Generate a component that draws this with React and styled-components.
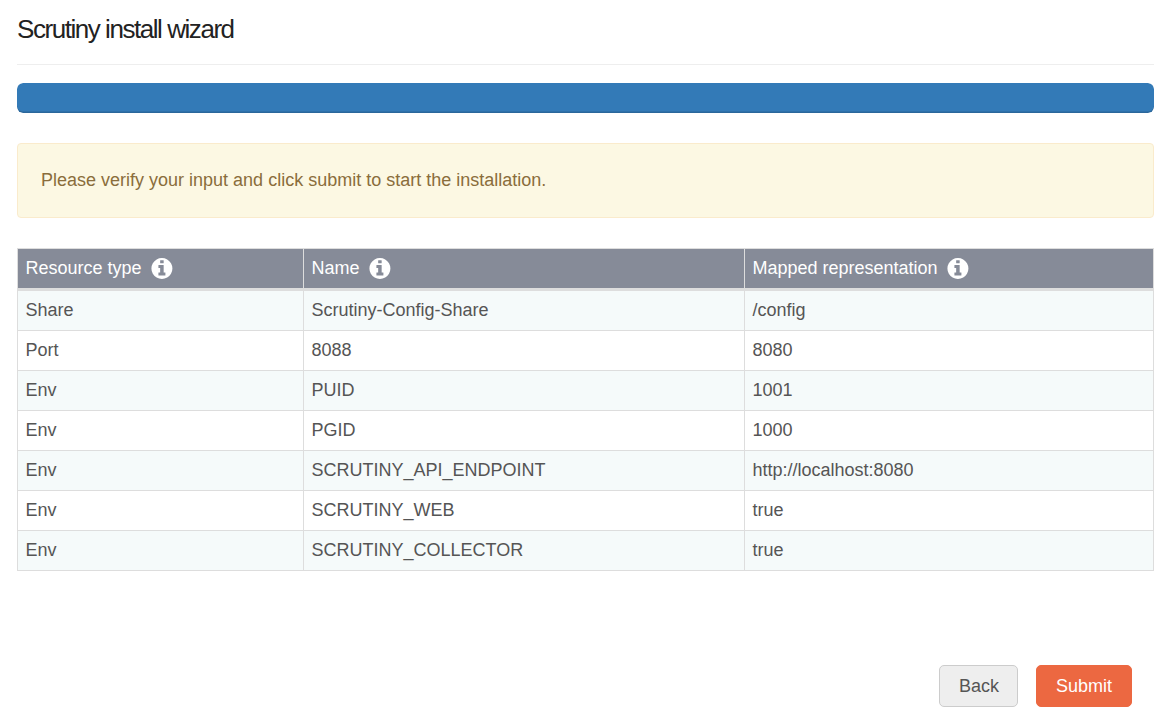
import React from "react";
import styled, { createGlobalStyle } from "styled-components";

const GlobalStyle = createGlobalStyle`
  *, *::before, *::after { box-sizing: border-box; }
  body {
    margin: 0;
    background: #fff;
    color: #555;
    font-family: "Liberation Sans", Arial, sans-serif;
    font-size: 18px;
    line-height: 24px;
  }
`;

const Page = styled.main`
  display: flex;
  flex-direction: column;
  height: 721px;
  padding: 0 12px 14px 17px;
`;

const Header = styled.header`
  height: 65px;
  padding-top: 14px;
  border-bottom: 1px solid #eee;
`;

const Title = styled.h1`
  margin: 0;
  color: #222;
  font-size: 26px;
  font-weight: 400;
  line-height: 30px;
  letter-spacing: -1.45px;
`;

const Progress = styled.div`
  height: 30px;
  margin-top: 18px;
  border-radius: 6px;
  background: #f5f5f5;
  overflow: hidden;
`;

const ProgressBar = styled.div`
  width: 100%;
  height: 100%;
  border-radius: 6px;
  background: #337ab7;
  box-shadow: inset 0 -1.5px 0 rgba(0, 0, 0, 0.15);
`;

const Notice = styled.p`
  margin: 30px 0;
  padding: 24px 23px 25px;
  border: 1px solid #faebcc;
  border-radius: 4px;
  background: #fcf8e3;
  color: #8a6d3b;
`;

const Table = styled.table`
  width: 1137px;
  table-layout: fixed;
  border-collapse: separate;
  border-spacing: 0;
  border: solid #ddd;
  border-width: 1px 0 0 1px;
`;

const HeadCell = styled.th`
  width: ${({ $width }) => $width}px;
  height: 42px;
  padding: 0 7.5px 1px;
  border: solid #ddd;
  border-width: 0 1px 3px 0;
  background: #868b98;
  color: #fff;
  font-weight: 400;
  text-align: left;
`;

const HeadLabel = styled.span`
  display: flex;
  align-items: center;
  gap: 9.5px;
`;

const Row = styled.tr`
  background: #fff;
  &:nth-child(odd) { background: #f5fafa; }
`;

const Cell = styled.td`
  height: 40px;
  padding: 0 7.5px 1px;
  border: solid #ddd;
  border-width: 0 1px 1px 0;
`;

const Icon = styled.svg`
  display: block;
  flex: none;
  width: 22px;
  height: 21px;
  margin-top: 1px;
  fill: #fff;
`;

const Actions = styled.footer`
  display: flex;
  justify-content: flex-end;
  gap: 18px;
  margin-top: auto;
  padding-right: 22px;
`;

const Button = styled.button`
  width: ${({ $primary }) => ($primary ? 96 : 79)}px;
  height: 42px;
  padding: ${({ $primary }) => ($primary ? "0" : "0 0 0 1px")};
  border: 1px solid ${({ $primary }) => ($primary ? "#ec6841" : "#ccc")};
  border-radius: 5px;
  background: ${({ $primary }) => ($primary ? "#ec6841" : "#eee")};
  color: ${({ $primary }) => ($primary ? "#fff" : "#555")};
  font: inherit;
`;

const InfoIcon = () => (
  <Icon viewBox="98 128 1609 1536" aria-hidden="true">
    <path d="M1152 1376v-160q0-14-9-23t-23-9h-96v-512q0-14-9-23t-23-9h-320q-14 0-23 9t-9 23v160q0 14 9 23t23 9h96v320h-96q-14 0-23 9t-9 23v160q0 14 9 23t23 9h448q14 0 23-9t9-23zm-128-896v-160q0-14-9-23t-23-9h-192q-14 0-23 9t-9 23v160q0 14 9 23t23 9h192q14 0 23-9t9-23zm640 416q0 209-103 385.5t-279.5 279.5-385.5 103-385.5-103-279.5-279.5-103-385.5 103-385.5 279.5-279.5 385.5-103 385.5 103 279.5 279.5 103 385.5z" />
  </Icon>
);

const columns = [
  { label: "Resource type", width: 286 },
  { label: "Name", width: 441 },
  { label: "Mapped representation", width: 409 },
];

const rows = [
  ["Share", "Scrutiny-Config-Share", "/config"],
  ["Port", "8088", "8080"],
  ["Env", "PUID", "1001"],
  ["Env", "PGID", "1000"],
  ["Env", "SCRUTINY_API_ENDPOINT", "http://localhost:8080"],
  ["Env", "SCRUTINY_WEB", "true"],
  ["Env", "SCRUTINY_COLLECTOR", "true"],
];

export default function App() {
  return (
    <>
      <GlobalStyle />
      <Page>
        <Header>
          <Title>Scrutiny install wizard</Title>
        </Header>
        <Progress>
          <ProgressBar />
        </Progress>
        <Notice>Please verify your input and click submit to start the installation.</Notice>
        <Table>
          <thead>
            <tr>
              {columns.map(({ label, width }) => (
                <HeadCell key={label} $width={width}>
                  <HeadLabel>
                    {label}
                    <InfoIcon />
                  </HeadLabel>
                </HeadCell>
              ))}
            </tr>
          </thead>
          <tbody>
            {rows.map((row) => (
              <Row key={row[1]}>
                {row.map((value, i) => (
                  <Cell key={i}>{value}</Cell>
                ))}
              </Row>
            ))}
          </tbody>
        </Table>
        <Actions>
          <Button type="button">Back</Button>
          <Button type="button" $primary>Submit</Button>
        </Actions>
      </Page>
    </>
  );
}
